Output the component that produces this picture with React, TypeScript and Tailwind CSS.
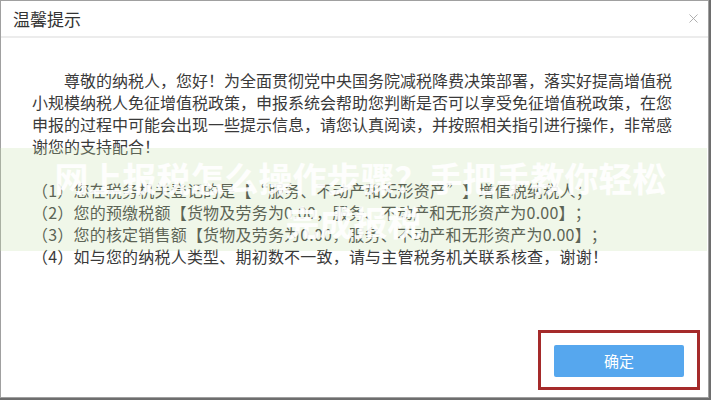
import { X } from "lucide-react";

const ITEMS = [
  "（1）您在税务机关登记的是【“服务、不动产和无形资产”】增值税纳税人；",
  "（2）您的预缴税额【货物及劳务为0.00，服务、不动产和无形资产为0.00】；",
  "（3）您的核定销售额【货物及劳务为0.00，服务、不动产和无形资产为0.00】；",
  "（4）如与您的纳税人类型、期初数不一致，请与主管税务机关联系核查，谢谢！",
];

export default function App() {
  return (
    <div className="relative h-[400px] w-[711px] overflow-hidden bg-[#6e6e6e] font-['Noto_Sans_CJK_SC',sans-serif] [text-spacing-trim:space-all]">
      <div className="flex h-[398px] w-[709px] flex-col border border-[#a0a0a0] bg-white">
        <div className="flex h-[37px] shrink-0 items-center justify-between border-b-2 border-[#ececec] pl-3 pr-[7px]">
          <span className="text-[17px] text-[#333]">温馨提示</span>
          <X className="size-[15px] text-[#a5a5a5]" strokeWidth={1.4} />
        </div>

        <div className="px-[31px] pt-[31px] text-[16px] leading-[22px] text-[#3a3a3a]">
          <p className="indent-[2em]">
            尊敬的纳税人，您好！为全面贯彻党中央国务院减税降费决策部署，落实好提高增值税小规模纳税人免征增值税政策，申报系统会帮助您判断是否可以享受免征增值税政策，在您申报的过程中可能会出现一些提示信息，请您认真阅读，并按照相关指引进行操作，非常感谢您的支持配合！
          </p>
          <ul className="mt-[22px] tracking-[0.2px]">
            {ITEMS.map((t) => (
              <li key={t} className="whitespace-nowrap">
                {t}
              </li>
            ))}
          </ul>
        </div>

        <div className="mt-auto flex justify-end pb-[7px] pr-[8px]">
          <div className="border-[3px] border-[#a52a2a] px-[13px] pb-[10px] pt-[12px]">
            <button className="h-[32px] w-[130px] rounded-[2px] bg-[#56a7ee] text-[15px] text-white">
              确定
            </button>
          </div>
        </div>
      </div>

      {/* watermark band over the list */}
      <div className="absolute left-0 top-[148px] flex h-[103px] w-[707px] flex-col items-center bg-[#c4e0a8]/25 pt-[8px] text-[34px] font-bold leading-[44px] text-white/90">
        <span className="pl-[24px] pr-[10px]">网上报税怎么操作步骤？手把手教你轻松</span>
        <span>完成报税</span>
      </div>
    </div>
  );
}
